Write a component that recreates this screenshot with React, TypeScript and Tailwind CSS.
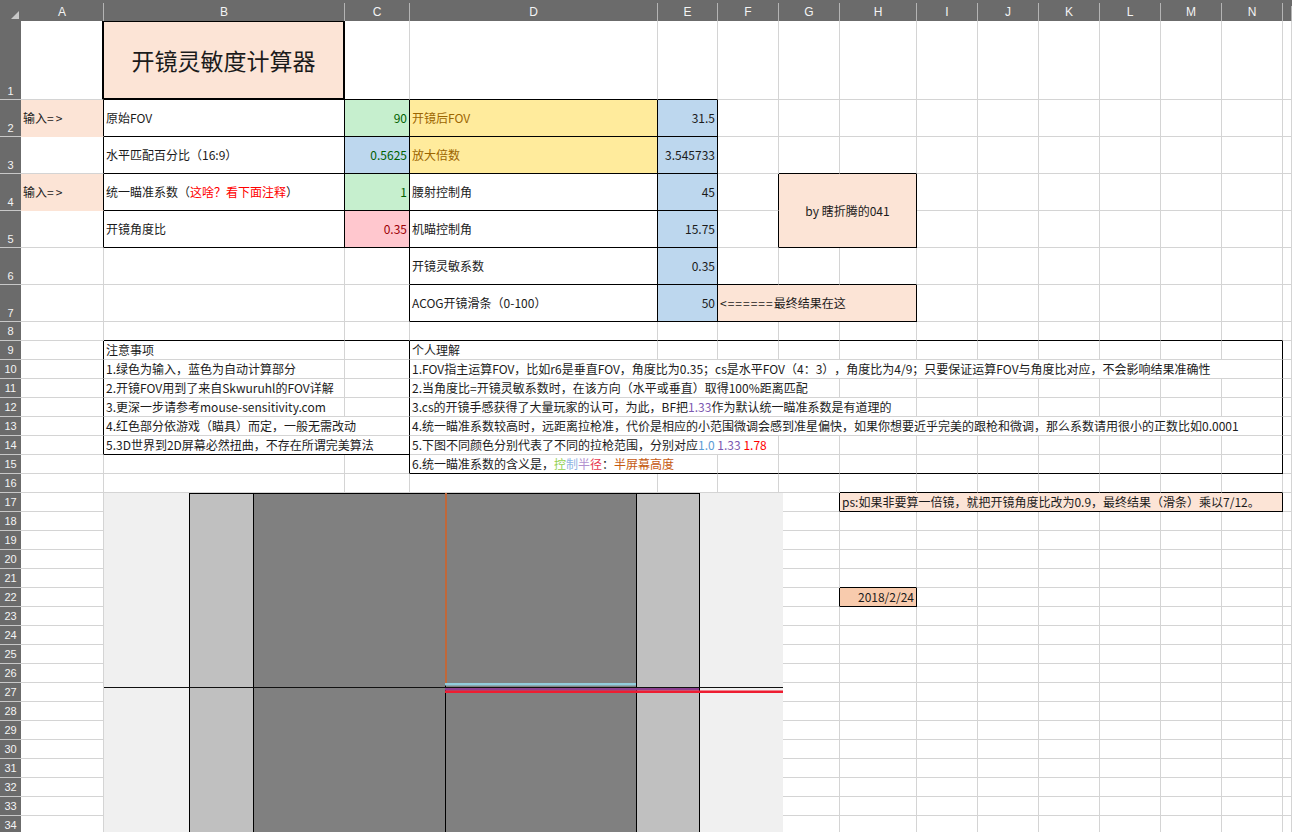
import React from 'react';
import clsx from 'clsx';

type CellDef = {
  col: number; // 1 = A
  span?: number;
  rowSpan?: number;
  text?: React.ReactNode;
  bg?: string;
  color?: string;
  align?: 'left' | 'right' | 'center';
  title?: boolean;
  thickRight?: boolean;
};

type Box = { r1: number; r2: number; c1: number; c2: number; inner?: boolean };

const LETTERS = ['A', 'B', 'C', 'D', 'E', 'F', 'G', 'H', 'I', 'J', 'K', 'L', 'M', 'N', ''];
const ROW_COUNT = 35;

const PEACH = 'bg-[#fce4d6]';
const GREEN = 'bg-[#c6efce]';
const BLUE = 'bg-[#bdd7ee]';
const PINK = 'bg-[#ffc7ce]';
const YELLOW = 'bg-[#ffeb9c]';

const spanCls: Record<number, string> = {
  1: '',
  2: 'col-span-2',
  3: 'col-span-3',
  4: 'col-span-4',
  5: 'col-span-5',
  7: 'col-span-7',
  11: 'col-span-11',
};

// outlined ranges on the sheet (inner = every cell gets its own border)
const boxes: Box[] = [
  { r1: 2, r2: 5, c1: 2, c2: 3, inner: true },
  { r1: 2, r2: 7, c1: 4, c2: 5, inner: true },
  { r1: 4, r2: 5, c1: 7, c2: 8 },
  { r1: 7, r2: 7, c1: 6, c2: 8 },
  { r1: 9, r2: 14, c1: 2, c2: 3 },
  { r1: 9, r2: 15, c1: 4, c2: 14 },
  { r1: 17, r2: 17, c1: 8, c2: 14 },
  { r1: 22, r2: 22, c1: 8, c2: 8 },
];

const inputArrow = (
  <>
    输入<span className="tracking-[2px]">=&gt;</span>
  </>
);

const rows: Record<number, CellDef[]> = {
  1: [
    { col: 1, thickRight: true },
    { col: 2, title: true, bg: PEACH, align: 'center', text: '开镜灵敏度计算器' },
  ],
  2: [
    { col: 1, bg: PEACH, text: inputArrow },
    { col: 2, text: '原始FOV' },
    { col: 3, bg: GREEN, color: 'text-[#006100]', align: 'right', text: '90' },
    { col: 4, bg: YELLOW, color: 'text-[#9c6500]', text: '开镜后FOV' },
    { col: 5, bg: BLUE, align: 'right', text: '31.5' },
  ],
  3: [
    { col: 2, text: '水平匹配百分比（16:9）' },
    { col: 3, bg: BLUE, color: 'text-[#006100]', align: 'right', text: '0.5625' },
    { col: 4, bg: YELLOW, color: 'text-[#9c6500]', text: '放大倍数' },
    { col: 5, bg: BLUE, align: 'right', text: '3.545733' },
  ],
  4: [
    { col: 1, bg: PEACH, text: inputArrow },
    {
      col: 2,
      text: (
        <>
          统一瞄准系数（<span className="text-[#ff0000]">这啥？看下面注释</span>）
        </>
      ),
    },
    { col: 3, bg: GREEN, color: 'text-[#006100]', align: 'right', text: '1' },
    { col: 4, text: '腰射控制角' },
    { col: 5, bg: BLUE, align: 'right', text: '45' },
    { col: 7, span: 2, rowSpan: 2, bg: PEACH, align: 'center', text: 'by 瞎折腾的041' },
  ],
  5: [
    { col: 2, text: '开镜角度比' },
    { col: 3, bg: PINK, color: 'text-[#9c0006]', align: 'right', text: '0.35' },
    { col: 4, text: '机瞄控制角' },
    { col: 5, bg: BLUE, align: 'right', text: '15.75' },
  ],
  6: [
    { col: 4, text: '开镜灵敏系数' },
    { col: 5, bg: BLUE, align: 'right', text: '0.35' },
  ],
  7: [
    { col: 4, text: 'ACOG开镜滑条（0-100）' },
    { col: 5, bg: BLUE, align: 'right', text: '50' },
    {
      col: 6,
      span: 3,
      bg: PEACH,
      text: (
        <>
          <span className="tracking-[1px]">&lt;======</span>最终结果在这
        </>
      ),
    },
  ],
  9: [
    { col: 2, text: '注意事项' },
    { col: 4, text: '个人理解' },
  ],
  10: [
    { col: 2, text: '1.绿色为输入，蓝色为自动计算部分' },
    {
      col: 4,
      span: 11,
      text: '1.FOV指主运算FOV，比如r6是垂直FOV，角度比为0.35；cs是水平FOV（4：3），角度比为4/9；只要保证运算FOV与角度比对应，不会影响结果准确性',
    },
  ],
  11: [
    { col: 2, text: '2.开镜FOV用到了来自Skwuruhl的FOV详解' },
    { col: 4, span: 4, text: '2.当角度比=开镜灵敏系数时，在该方向（水平或垂直）取得100%距离匹配' },
  ],
  12: [
    { col: 2, text: '3.更深一步请参考mouse-sensitivity.com' },
    {
      col: 4,
      span: 5,
      text: (
        <>
          3.cs的开镜手感获得了大量玩家的认可，为此，BF把<span className="text-[#7b58b0]">1.33</span>
          作为默认统一瞄准系数是有道理的
        </>
      ),
    },
  ],
  13: [
    { col: 2, span: 2, text: '4.红色部分依游戏（瞄具）而定，一般无需改动' },
    {
      col: 4,
      span: 11,
      text: '4.统一瞄准系数较高时，远距离拉枪准，代价是相应的小范围微调会感到准星偏快，如果你想要近乎完美的跟枪和微调，那么系数请用很小的正数比如0.0001',
    },
  ],
  14: [
    { col: 2, span: 2, text: '5.3D世界到2D屏幕必然扭曲，不存在所谓完美算法' },
    {
      col: 4,
      span: 3,
      text: (
        <>
          5.下图不同颜色分别代表了不同的拉枪范围，分别对应
          <span className="text-[#5b9bd5]">1.0</span> <span className="text-[#7b58b0]">1.33</span>{' '}
          <span className="text-[#ff0000]">1.78</span>
        </>
      ),
    },
  ],
  15: [
    {
      col: 4,
      span: 2,
      text: (
        <>
          6.统一瞄准系数的含义是，
          <span className="text-[#92d050]">控</span>
          <span className="text-[#8eb4e3]">制</span>
          <span className="text-[#b18fcf]">半</span>
          <span className="text-[#e8384f]">径</span>：
          <span className="text-[#c55a11]">半屏幕高度</span>
        </>
      ),
    },
  ],
  17: [
    {
      col: 8,
      span: 7,
      bg: PEACH,
      text: 'ps:如果非要算一倍镜，就把开镜角度比改为0.9，最终结果（滑条）乘以7/12。',
    },
  ],
  22: [{ col: 8, bg: 'bg-[#f8cbad]', align: 'right', text: '2018/2/24' }],
};

function rightBlack(r: number, cEnd: number) {
  return boxes.some(
    (b) =>
      r >= b.r1 &&
      r <= b.r2 &&
      (cEnd === b.c2 || cEnd + 1 === b.c1 || (b.inner && cEnd >= b.c1 && cEnd < b.c2)),
  );
}

function bottomBlack(rEnd: number, c: number, cEnd: number) {
  return boxes.some(
    (b) =>
      cEnd >= b.c1 &&
      c <= b.c2 &&
      (rEnd === b.r2 || rEnd + 1 === b.r1 || (b.inner && rEnd >= b.r1 && rEnd < b.r2)),
  );
}

function SheetCell({ r, cell }: { r: number; cell: CellDef }) {
  const span = cell.span ?? 1;
  const rs = cell.rowSpan ?? 1;
  const cEnd = cell.col + span - 1;
  const rEnd = r + rs - 1;

  let right = cell.bg ? 'border-r border-r-transparent' : 'border-r border-r-[#d4d4d4]';
  if (cell.thickRight || cell.title) right = 'border-r-2 border-r-black';
  else if (rightBlack(r, cEnd)) right = 'border-r border-r-black';

  let bottom = cell.bg ? 'border-b border-b-transparent' : 'border-b border-b-[#d4d4d4]';
  if (cell.title) bottom = 'border-b-2 border-b-black';
  else if (bottomBlack(rEnd, cell.col, cEnd)) bottom = 'border-b border-b-black';

  return (
    <div
      className={clsx(
        'flex items-center overflow-hidden whitespace-nowrap px-[2px]',
        spanCls[span],
        rs === 2 && 'row-span-2',
        right,
        bottom,
        cell.title && 'border-t border-t-black text-[23px]',
        cell.bg,
        cell.color ?? 'text-[#1b1b1b]',
        cell.align === 'right' && 'justify-end',
        cell.align === 'center' && 'justify-center',
      )}
    >
      {cell.text !== undefined && <span className="whitespace-pre">{cell.text}</span>}
    </div>
  );
}

function ScopeDiagram() {
  return (
    <svg width="679" height="340" viewBox="0 0 679 340" className="block">
      <rect x="0" y="0" width="679" height="340" fill="#f0f0f0" />
      <rect x="85.5" y="0.5" width="510" height="400" fill="#c0c0c0" stroke="#000" />
      <rect x="149.5" y="0.5" width="383" height="400" fill="#808080" stroke="#000" />
      <rect x="341" y="0" width="2" height="190" fill="#c0683a" />
      <line x1="341.5" y1="190" x2="341.5" y2="340" stroke="#000" />
      <rect x="341" y="190" width="191" height="2.5" fill="#92cddc" />
      <line x1="0" y1="194.5" x2="679" y2="194.5" stroke="#111" />
      <rect x="341" y="195" width="254" height="2.5" fill="#8b3f8f" />
      <rect x="341" y="197.5" width="338" height="2.5" fill="#ee1d31" />
    </svg>
  );
}

export default function App() {
  const body: React.ReactNode[] = [];
  const covered = new Set<string>();

  for (let r = 1; r <= ROW_COUNT; r++) {
    body.push(
      <div
        key={`h${r}`}
        className={clsx(
          'flex justify-center border-b border-b-[#c8c8c8] bg-[#6b6b6b] font-["Liberation_Sans",Arial,sans-serif] text-[11px] leading-[13px] text-[#f4f4f4]',
          r <= 7 ? 'items-end pb-[1px]' : 'items-center',
        )}
      >
        {r}
      </div>,
    );
    const defs = rows[r] ?? [];
    let c = 1;
    while (c <= 15) {
      if (covered.has(`${r}-${c}`)) {
        c++;
        continue;
      }
      const def = defs.find((d) => d.col === c) ?? { col: c };
      const span = def.span ?? 1;
      if ((def.rowSpan ?? 1) > 1) {
        for (let cc = c; cc < c + span; cc++) covered.add(`${r + 1}-${cc}`);
      }
      body.push(<SheetCell key={`${r}-${c}`} r={r} cell={def} />);
      c += span;
    }
  }

  return (
    <div className="h-[832px] w-[1292px] overflow-hidden bg-white font-['Noto_Sans_CJK_SC','Microsoft_YaHei',sans-serif] text-[12px] [text-spacing-trim:space-all]">
      <div className="relative">
        <div className="grid grid-cols-[21px_83px_241px_65px_248px_60px_61px_61px_77px_61px_61px_61px_61px_61px_61px_1fr] grid-rows-[21px_79px_repeat(6,37px)_repeat(28,19px)]">
          {/* corner */}
          <div className="relative bg-[#6b6b6b]">
            <svg width="21" height="21" viewBox="0 0 21 21" className="block">
              <polygon points="19,11 19,19 11,19" fill="#c8c8c8" />
            </svg>
          </div>
          {LETTERS.map((l, i) => (
            <div key={`c${i}`} className="flex flex-col bg-[#6b6b6b]">
              <div className="h-[6px]" />
              <div className="flex flex-1 items-center justify-center border-r border-r-[#b4b4b4] font-['Liberation_Sans',Arial,sans-serif] text-[12px] text-[#f4f4f4]">
                {l}
              </div>
            </div>
          ))}
          {body}
        </div>

        {/* picture floating over the sheet */}
        <div className="absolute left-[104px] top-[493px]">
          <ScopeDiagram />
        </div>
      </div>
    </div>
  );
}
